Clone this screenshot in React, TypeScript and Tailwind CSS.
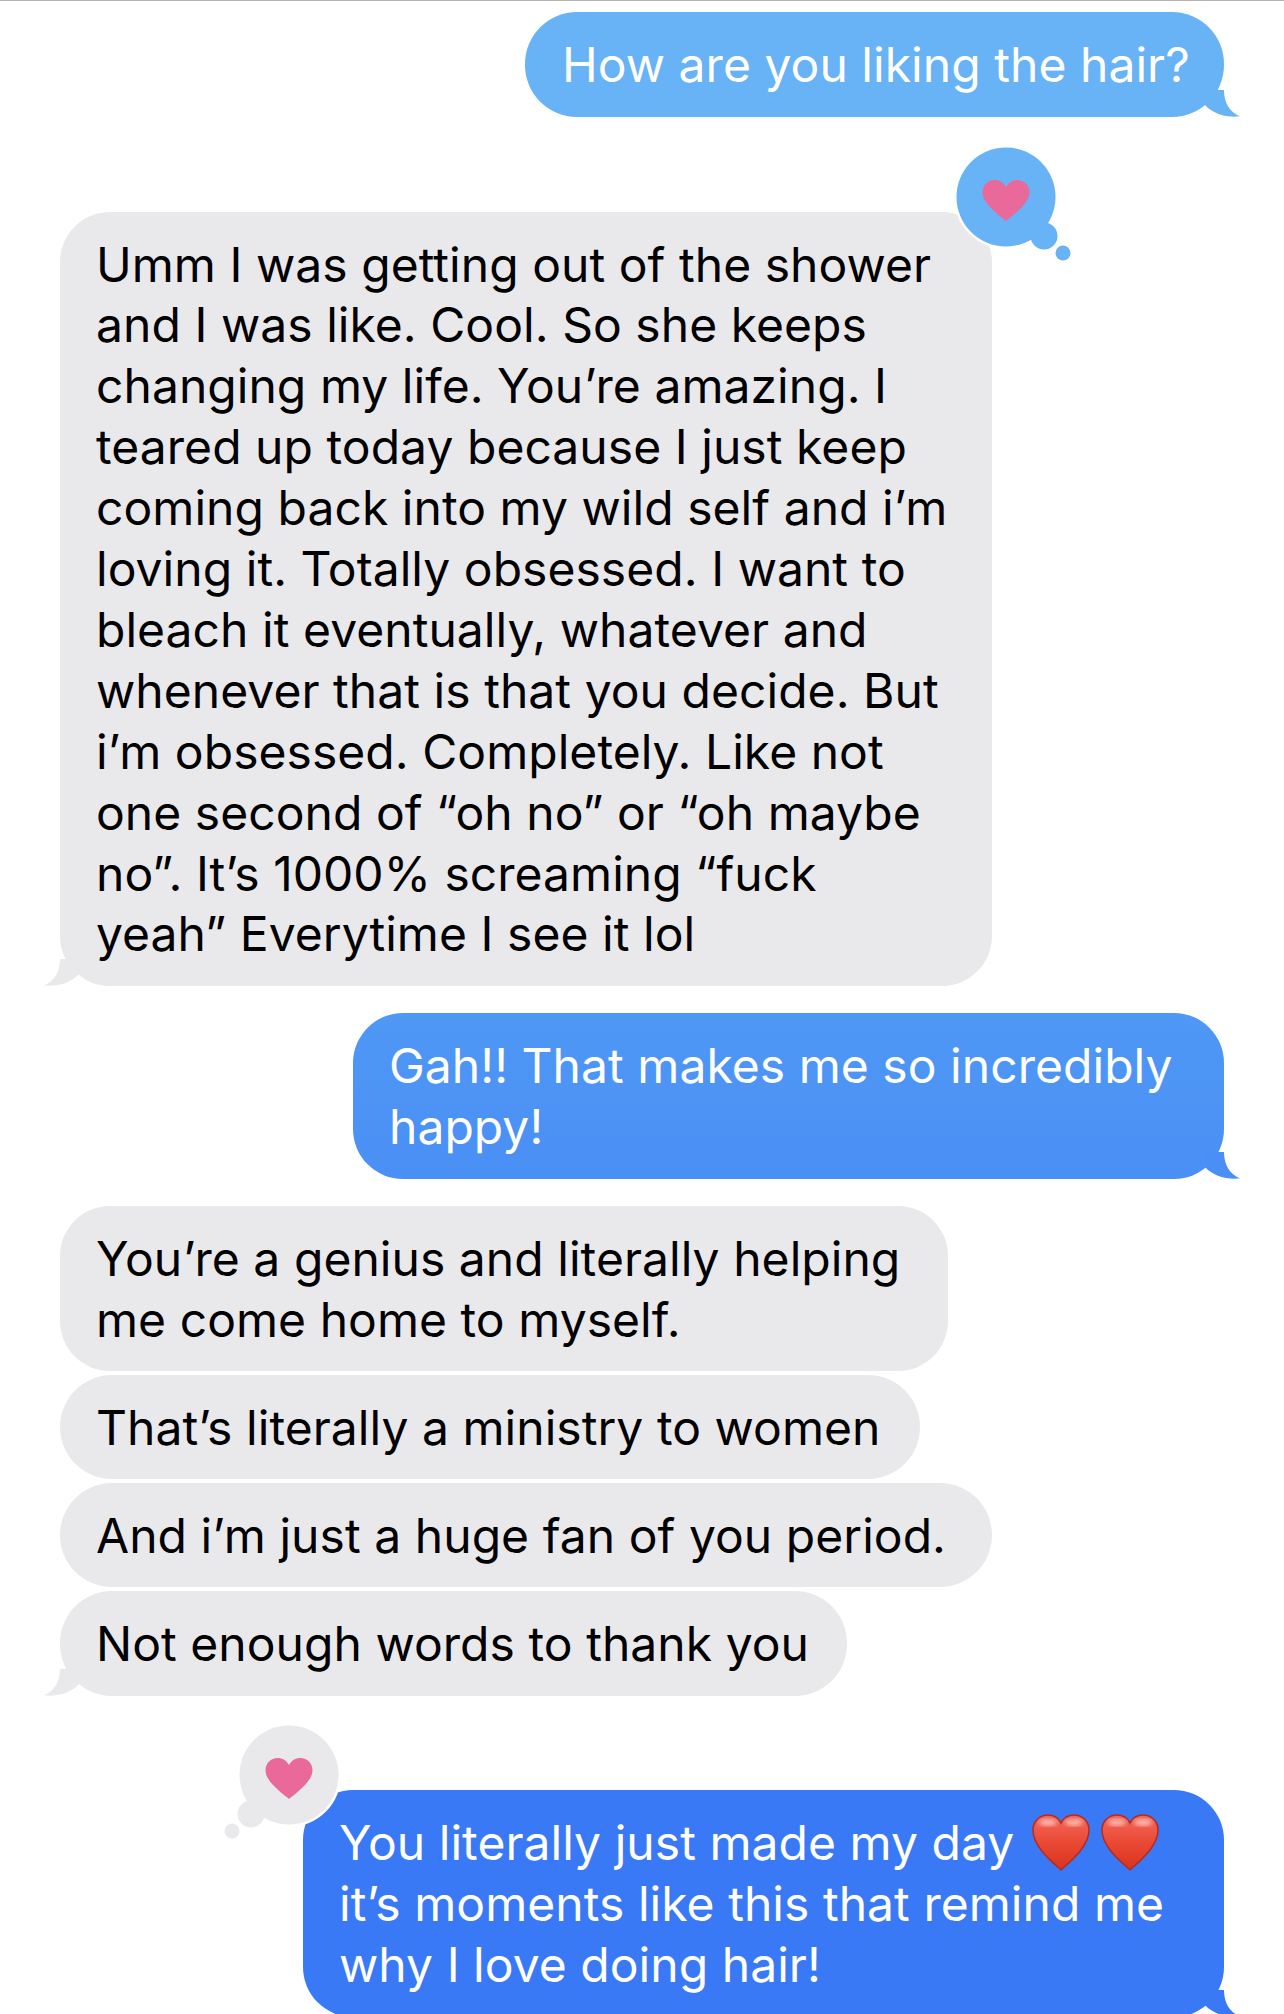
import React from "react";

function Tail({ color, side }: { color: string; side: "left" | "right" }) {
  return (
    <svg
      viewBox="0 0 44 27"
      className={
        side === "right"
          ? "absolute bottom-0 right-[-16px] h-[27px] w-[44px]"
          : "absolute bottom-0 left-[-16px] h-[27px] w-[44px] -scale-x-100"
      }
    >
      <path d="M28 0C28 12 33 22 44 26.300C33 28 18 25 9 15L9 0Z" fill={color} />
    </svg>
  );
}

function Reaction({ color, mirrored, className }: { color: string; mirrored?: boolean; className: string }) {
  return (
    <svg viewBox="0 0 124 124" className={`absolute h-[124px] w-[124px] ${mirrored ? "-scale-x-100" : ""} ${className}`}>
      <circle cx="56" cy="56" r="52" fill="#ffffff" />
      <circle cx="56" cy="56" r="49.500" fill={color} />
      <circle cx="94" cy="95" r="13.500" fill={color} />
      <circle cx="113" cy="112" r="7.500" fill={color} />
      <path
        transform="translate(32.500 39)"
        d="M23.500 41C19 37 0 24 0 12.500C0 5 5.500 0 12 0C17 0 21 2.500 23.500 7C26 2.500 30 0 35 0C41.500 0 47 5 47 12.500C47 24 28 37 23.500 41Z"
        fill="#e96a9a"
      />
    </svg>
  );
}

function RedHeart({ id, className }: { id: string; className: string }) {
  return (
    <svg viewBox="0 0 58 57" className={`mb-[2px] h-[57px] w-[58px] shrink-0 ${className}`}>
      <defs>
        <linearGradient id={`g${id}`} x1="0" y1="0" x2="0" y2="1">
          <stop offset="0" stopColor="#f4695c" />
          <stop offset="0.5" stopColor="#ea4935" />
          <stop offset="1" stopColor="#d8341f" />
        </linearGradient>
        <filter id={`b${id}`}>
          <feGaussianBlur stdDeviation="2" />
        </filter>
      </defs>
      <path
        d="M29 56C23 50 1 34 1 16C1 7 8 1 16 1C22 1 26.500 4 29 9C31.500 4 36 1 42 1C50 1 57 7 57 16C57 34 35 50 29 56Z"
        fill={`url(#g${id})`}
        stroke="#b52a1b"
        strokeWidth="1.500"
      />
      <ellipse cx="16" cy="8.500" rx="9" ry="3.500" fill="#fbc4bb" opacity="0.85" filter={`url(#b${id})`} />
      <ellipse cx="42" cy="8.500" rx="9" ry="3.500" fill="#fbc4bb" opacity="0.85" filter={`url(#b${id})`} />
    </svg>
  );
}

function Lines({ lines }: { lines: string[] }) {
  return (
    <>
      {lines.map((l) => (
        <div key={l} className="whitespace-nowrap">
          {l}
        </div>
      ))}
    </>
  );
}

export default function App() {
  return (
    <div className="h-[2014px] w-[1284px] overflow-hidden border-t border-[#b4b4b4] bg-white font-['Inter','Liberation_Sans',sans-serif] text-[48px] leading-[60.9px] tracking-[0.001em]">
      <div className="flex flex-col">
        <div className="relative mr-[60px] mt-[11px] h-[105px] w-[699px] self-end rounded-[52px] bg-[#68b2f6] px-[37px] py-[23px] text-white">
          <Lines lines={["How are you liking the hair?"]} />
          <Tail color="#68b2f6" side="right" />
        </div>

        <div className="relative ml-[60px] mt-[95px] h-[774px] w-[932px] rounded-[50px] bg-[#e9e9eb] px-[36px] py-[22.5px] text-black">
          <Lines
            lines={[
              "Umm I was getting out of the shower",
              "and I was like. Cool. So she keeps",
              "changing my life. You’re amazing. I",
              "teared up today because I just keep",
              "coming back into my wild self and i’m",
              "loving it. Totally obsessed. I want to",
              "bleach it eventually, whatever and",
              "whenever that is that you decide. But",
              "i’m obsessed. Completely. Like not",
              "one second of “oh no” or “oh maybe",
              "no”. It’s 1000% screaming “fuck",
              "yeah” Everytime I see it lol",
            ]}
          />
          <Tail color="#e9e9eb" side="left" />
          <Reaction color="#68b2f6" className="left-[890px] top-[-71px]" />
        </div>

        <div className="relative mr-[60px] mt-[27px] h-[166px] w-[871px] self-end rounded-[50px] bg-linear-to-b from-[#4f98f5] to-[#4a8ff5] px-[36px] py-[23px] text-white">
          <Lines lines={["Gah!! That makes me so incredibly", "happy!"]} />
          <Tail color="#4a8ff5" side="right" />
        </div>

        <div className="relative ml-[60px] mt-[27px] h-[165px] w-[888px] rounded-[50px] bg-[#e9e9eb] px-[36px] py-[23px] text-black">
          <Lines lines={["You’re a genius and literally helping", "me come home to myself."]} />
        </div>
        <div className="relative ml-[60px] mt-[4px] h-[104px] w-[860px] rounded-[52px] bg-[#e9e9eb] px-[36px] py-[22.5px] text-black">
          <Lines lines={["That’s literally a ministry to women"]} />
        </div>
        <div className="relative ml-[60px] mt-[4px] h-[104px] w-[932px] rounded-[52px] bg-[#e9e9eb] px-[36px] py-[22.5px] text-black">
          <Lines lines={["And i’m just a huge fan of you period."]} />
        </div>
        <div className="relative ml-[60px] mt-[4px] h-[105px] w-[787px] rounded-[52px] bg-[#e9e9eb] px-[36px] py-[22.5px] text-black">
          <Lines lines={["Not enough words to thank you"]} />
          <Tail color="#e9e9eb" side="left" />
        </div>

        <div className="relative mr-[60px] mt-[94px] h-[227px] w-[921px] self-end rounded-[50px] bg-[#3a79f6] px-[36px] py-[23px] text-white">
          <div className="flex items-center whitespace-nowrap">
            <span>You literally just made my day</span>
            <RedHeart id="a" className="ml-auto" />
            <RedHeart id="b" className="ml-[11px] mr-[29px]" />
          </div>
          <div className="whitespace-nowrap">it’s moments like this that remind me</div>
          <div className="whitespace-nowrap">why I love doing hair!</div>
          <Tail color="#3a79f6" side="right" />
          <Reaction color="#e9e9eb" mirrored className="left-[-82.5px] top-[-71px]" />
        </div>
      </div>
    </div>
  );
}
